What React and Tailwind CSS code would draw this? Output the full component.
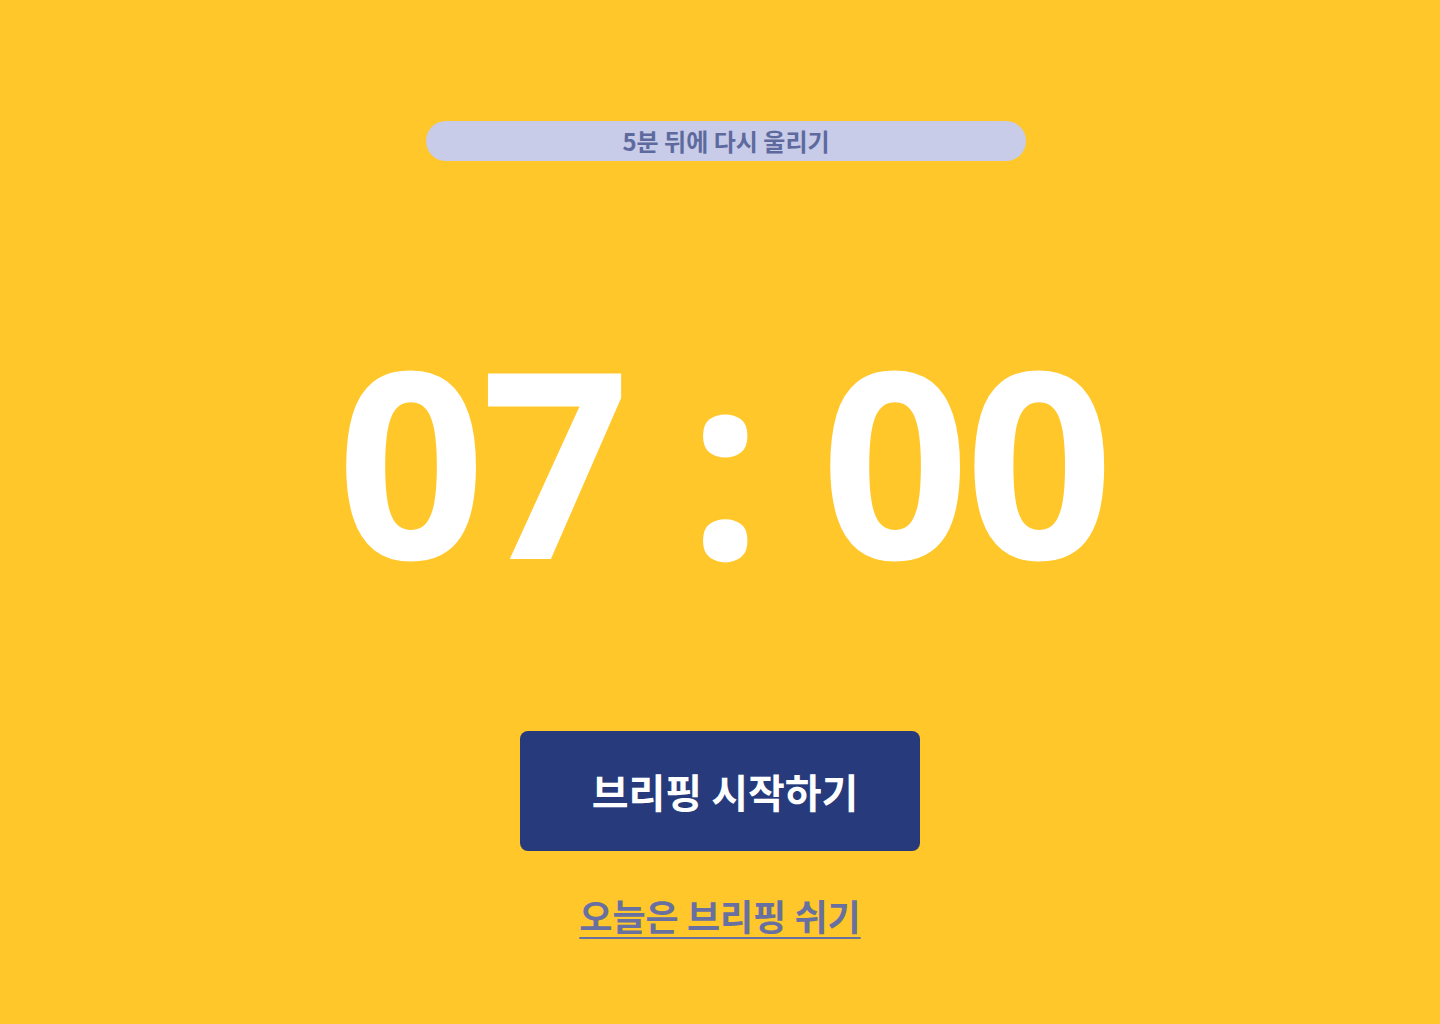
export default function App() {
  return (
    <div className="min-h-screen w-full bg-[#ffc72a] flex flex-col items-center font-['Noto_Sans_CJK_KR',sans-serif]">
      <div className="pt-[121px] pl-[12px]">
        <button className="w-[600px] h-[40px] rounded-full bg-[#c8cce8] text-[#5e6a9e] text-[24px] font-bold leading-none flex items-center justify-center">
          5분 뒤에 다시 울리기
        </button>
      </div>

      <div className="mt-[167px] pl-[6px] font-['Open_Sans',sans-serif] text-white text-[260px] font-bold leading-none tracking-[-4.5px] whitespace-pre">
        07 : 00
      </div>

      <button className="mt-[143px] w-[400px] h-[120px] rounded-lg bg-[#263a7c] text-white text-[40px] font-bold leading-none flex items-center justify-center pl-[10px]">
        브리핑 시작하기
      </button>

      <a
        href="#"
        className="mt-[46px] text-[36px] font-bold leading-none text-[#6770a0] underline underline-offset-[6px] decoration-2"
      >
        오늘은 브리핑 쉬기
      </a>
    </div>
  );
}
